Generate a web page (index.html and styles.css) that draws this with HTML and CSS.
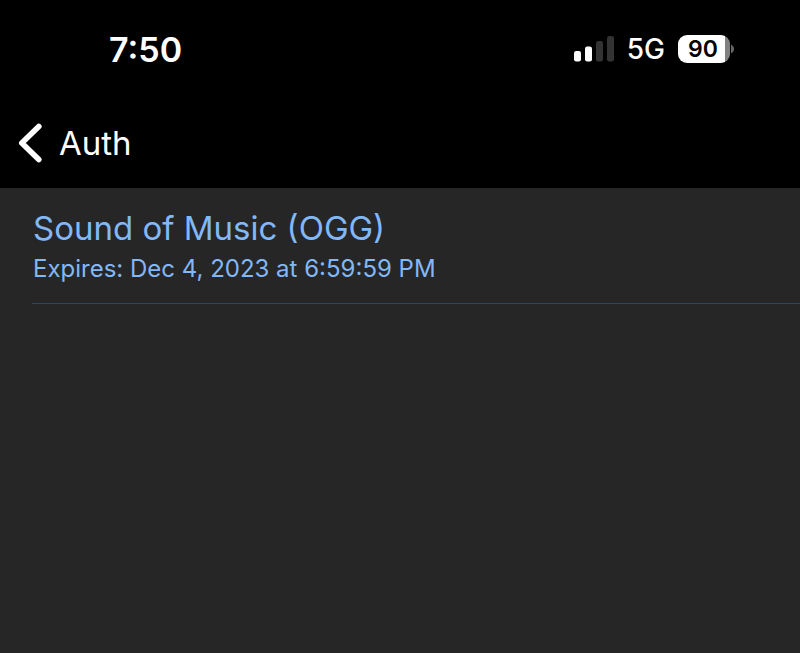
FILE: index.html
```html
<!DOCTYPE html>
<html lang="en">

<head>
    <meta charset="UTF-8">
    <meta name="viewport" content="width=device-width, initial-scale=1.0">
    <title>Auth</title>
    <link rel="stylesheet" href="styles.css">
</head>

<body>
    <header class="header">
        <div class="status-bar">
            <span class="clock">7:50</span>
            <div class="status-icons">
                <svg class="signal" width="40" height="26" viewBox="0 0 40 26" aria-hidden="true">
                    <rect x="0" y="15" width="7" height="10.5" rx="2.2" fill="#fff"/>
                    <rect x="11" y="10.5" width="7" height="15" rx="2.2" fill="#fff"/>
                    <rect x="22" y="5" width="7" height="20.5" rx="2.2" fill="#333"/>
                    <rect x="33" y="0" width="7" height="25.5" rx="2.2" fill="#333"/>
                </svg>
                <span class="network">5G</span>
                <div class="battery">
                    <span class="battery-level">90</span>
                    <svg class="battery-tip" width="3" height="10" viewBox="0 0 3 10" aria-hidden="true">
                        <path d="M0 0.5C4 2.5 4 7.5 0 9.5Z" fill="#666"/>
                    </svg>
                </div>
            </div>
        </div>
        <nav class="nav-bar">
            <button class="back-button" type="button">
                <svg width="24" height="40" viewBox="0 0 24 40" aria-hidden="true">
                    <path d="M20.8 3.5L3.8 20L20.8 36.5" fill="none" stroke="#fff" stroke-width="5.6" stroke-linecap="round" stroke-linejoin="round"/>
                </svg>
                <span>Auth</span>
            </button>
        </nav>
    </header>

    <main>
        <ul class="list">
            <li class="item">
                <a class="item-link" href="#">
                    <span class="item-title">Sound of Music (OGG)</span>
                    <span class="item-expires">Expires: Dec 4, 2023 at 6:59:59 PM</span>
                </a>
            </li>
        </ul>
    </main>
</body>

</html>
```
FILE: styles.css
```css
* {
    margin: 0;
    padding: 0;
    box-sizing: border-box;
}

body {
    font-family: Inter, sans-serif;
    background-color: #262626;
    color: #fff;
}

.header {
    background-color: #000;
}

.status-bar {
    display: flex;
    justify-content: space-between;
    align-items: center;
    height: 98px;
    padding: 0 66px 0 109px;
}

.clock {
    font-size: 34px;
    font-weight: 600;
}

.status-icons {
    display: flex;
    align-items: center;
    gap: 13px;
}

.network {
    font-size: 28px;
    font-weight: 500;
}

.battery {
    display: flex;
    align-items: center;
    gap: 1px;
}

.battery-level {
    width: 52px;
    padding-right: 2px;
    border-radius: 9px;
    background: linear-gradient(to right, #fff 90%, #808080 90%);
    color: #000;
    font-size: 23px;
    font-weight: 600;
    line-height: 28px;
    text-align: center;
}

.nav-bar {
    display: flex;
    align-items: center;
    height: 90px;
    padding: 0 18px;
}

.back-button {
    display: flex;
    align-items: center;
    gap: 17px;
    border: none;
    background: none;
    color: #fff;
    font-family: inherit;
    font-size: 33px;
    cursor: pointer;
}

.list {
    padding-left: 32px;
    list-style: none;
}

.item {
    border-bottom: 1px solid #2c485e;
}

.item-link {
    display: block;
    padding: 20px 1px 16px;
    color: #82b8f8;
    text-decoration: none;
}

.item-title,
.item-expires {
    display: block;
}

.item-title {
    font-size: 33px;
    line-height: 40px;
}

.item-expires {
    padding-top: 3px;
    font-size: 24px;
    line-height: 36px;
}
```
